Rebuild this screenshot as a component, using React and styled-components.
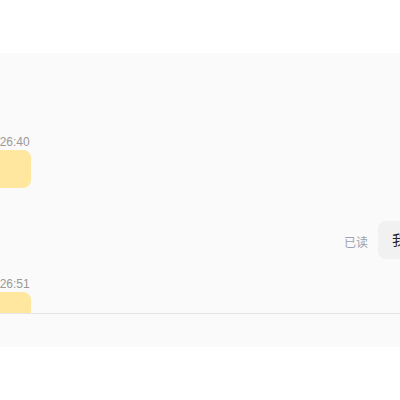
import styled, { createGlobalStyle } from "styled-components";

const GlobalStyle = createGlobalStyle`
  html, body {
    margin: 0;
    padding: 0;
    background: #ffffff;
    font-family: "Liberation Sans", "Noto Sans CJK SC", sans-serif;
  }
`;

const messages = [
  { id: 1, side: "left", time: "12:26:40", text: "" },
  { id: 2, side: "right", time: "12:26:45", text: "我知道了", status: "已读" },
  { id: 3, side: "left", time: "12:26:51", text: "" },
];

export default function App() {
  return (
    <>
      <GlobalStyle />
      <Page>
        <Header />
        <ChatBody>
          <MessageList>
            {messages.map((m) => (
              <MessageItem key={m.id} $side={m.side}>
                <Time>{m.time}</Time>
                <BubbleRow>
                  {m.status && <Status>{m.status}</Status>}
                  <Bubble $side={m.side}>{m.text}</Bubble>
                </BubbleRow>
              </MessageItem>
            ))}
          </MessageList>
        </ChatBody>
        <InputBar />
      </Page>
    </>
  );
}

const Page = styled.div`
  display: flex;
  flex-direction: column;
  width: 400px;
  height: 400px;
  background: #ffffff;
  overflow: hidden;
`;

const Header = styled.div`
  height: 53px;
  background: #ffffff;
`;

const ChatBody = styled.div`
  height: 260px;
  background: #fafafa;
  overflow: hidden;
`;

const MessageList = styled.div`
  display: flex;
  flex-direction: column;
  gap: 17px;
  padding-top: 81px;
  margin-left: -17px;
  margin-right: -62px;
`;

const MessageItem = styled.div`
  display: flex;
  flex-direction: column;
  align-items: ${(p) => (p.$side === "right" ? "flex-end" : "flex-start")};
`;

const Time = styled.div`
  font-size: 12px;
  line-height: 16px;
  color: #999999;
`;

const BubbleRow = styled.div`
  display: flex;
  align-items: flex-end;
  gap: 10px;
`;

const Status = styled.span`
  font-size: 12px;
  line-height: 16px;
  color: #9ca3af;
  margin-bottom: 8px;
`;

const Bubble = styled.div`
  min-width: 48px;
  box-sizing: border-box;
  height: 38px;
  padding: 9px 14px;
  border-radius: 8px;
  font-size: 14px;
  line-height: 20px;
  color: #222222;
  background: ${(p) => (p.$side === "right" ? "#f1f1f1" : "#ffe7a0")};
`;

const InputBar = styled.div`
  height: 33px;
  border-top: 1px solid #e5e5e5;
  background: #fafafa;
`;
